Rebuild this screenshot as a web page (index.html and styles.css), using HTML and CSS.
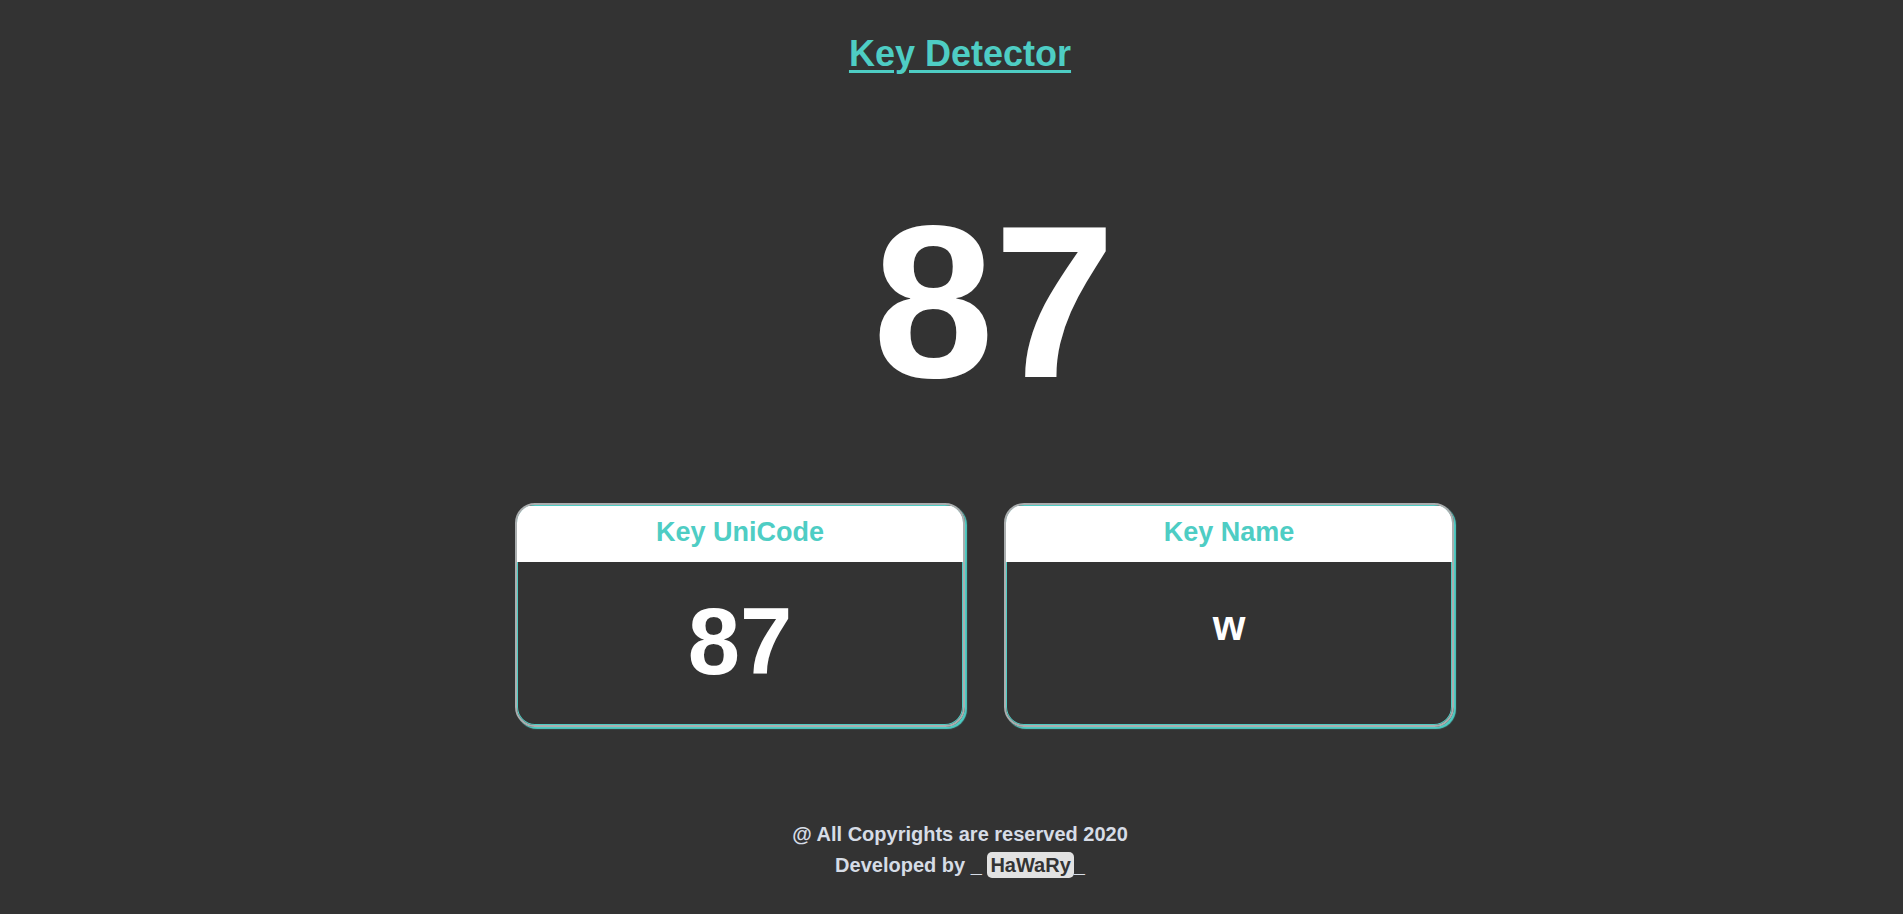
FILE: index.html
```html
<!DOCTYPE html>
<html lang="en">
<head>
<meta charset="utf-8">
<title>Key Detector</title>
<link rel="stylesheet" href="styles.css">
</head>
<body>
  <h1 class="title"><a href="#" class="title-link">Key Detector</a></h1>
  <div class="big-code">87</div>
  <div class="cards">
    <div class="card">
      <div class="card-head">Key UniCode</div>
      <div class="card-body"><span class="code-value">87</span></div>
    </div>
    <div class="card">
      <div class="card-head">Key Name</div>
      <div class="card-body"><span class="name-value">w</span></div>
    </div>
  </div>
  <footer class="footer">
    <p class="footer-line">@ All Copyrights are reserved 2020</p>
    <p class="footer-line">Developed by _ <span class="author">HaWaRy</span>_</p>
  </footer>
</body>
</html>
```

FILE: styles.css
```css
html, body {
  margin: 0;
  padding: 0;
}
body {
  background: #333333;
  font-family: "Liberation Sans", Arial, sans-serif;
  font-weight: bold;
  color: #ffffff;
  min-height: 914px;
}
.title {
  margin: 33px 0 0;
  padding-left: 17px;
  text-align: center;
  font-size: 36px;
  line-height: 41px;
  font-weight: bold;
}
.title-link {
  color: #4ecdc4;
  text-decoration: underline;
  text-decoration-thickness: 3px;
  text-underline-offset: 4px;
}
.big-code {
  margin-top: 119px;
  padding-left: 85px;
  text-align: center;
  font-size: 218px;
  line-height: 218px;
  height: 218px;
  color: #ffffff;
}
.cards {
  margin-top: 92px;
  padding-left: 66px;
  display: flex;
  justify-content: center;
  gap: 39px;
}
.card {
  box-sizing: border-box;
  width: 450px;
  height: 224px;
  border: 2px solid #aaaeaf;
  border-radius: 20px;
  overflow: hidden;
  box-shadow: 2px 2px 1px #4ecdc4, inset 0 0 0 1px #4ecdc4;
  display: flex;
  flex-direction: column;
}
.card-head {
  margin-top: 1px;
  background: #ffffff;
  color: #4ecdc4;
  font-size: 27px;
  line-height: 30px;
  padding: 11px 0 15px;
  text-align: center;
}
.card-body {
  flex: 1;
  text-align: center;
  display: flex;
  flex-direction: column;
  align-items: center;
}
.code-value {
  margin-top: 33px;
  font-size: 94px;
  line-height: 1;
}
.name-value {
  margin-top: 43px;
  font-size: 42px;
  line-height: 1;
}
.footer {
  margin-top: 92px;
  padding-left: 17px;
  text-align: center;
  color: #d6dce6;
  font-size: 20px;
  line-height: 31px;
}
.footer-line {
  margin: 0;
}
.author {
  background: #e2e2e2;
  color: #333333;
  border-radius: 5px;
  padding: 2px 3px;
}
```
